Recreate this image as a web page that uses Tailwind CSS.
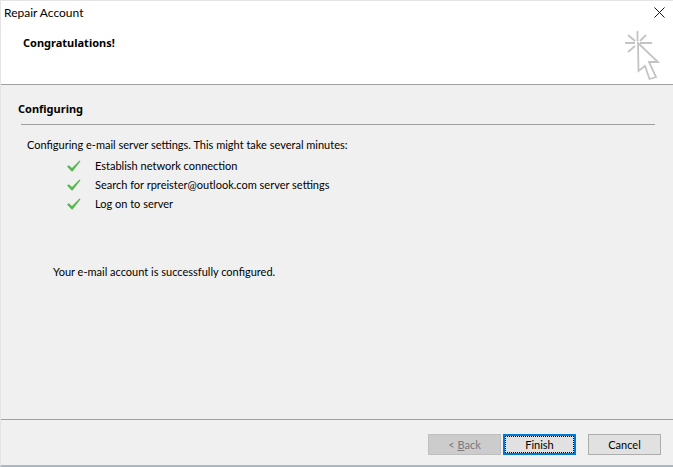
<!DOCTYPE html>
<html lang="en">
<head>
    <meta charset="UTF-8">
    <title>Repair Account</title>
    <script src="https://cdn.jsdelivr.net/npm/@tailwindcss/browser@4"></script>
</head>
<body class="bg-[#f0f0f0] font-['Lato',sans-serif] text-[11px] leading-[16px] text-black overflow-hidden">
    <div class="w-[673px] h-[467px] flex flex-col border-t border-l border-[#e4e4e4] border-b-2 border-b-[#a9b8c9]">
        <!-- header -->
        <div class="bg-white h-[83px] border-b border-[#a0a0a0] box-content relative">
            <div class="flex justify-between items-start pl-[3px] pr-[8px] pt-[4px]">
                <span class="text-[12px]">Repair Account</span>
                <svg class="mt-[2px]" width="11" height="11" viewBox="0 0 11 11" fill="none" stroke="#111" stroke-width="1"><path d="M0.5 0.5L10.5 10.5M10.5 0.5L0.5 10.5"/></svg>
            </div>
            <div class="pl-[22px] pt-[14px] font-['Noto_Sans',sans-serif] font-bold">Congratulations!</div>
            <svg class="absolute left-[619px] top-[25px]" width="44" height="56" viewBox="0 0 44 56" fill="none" stroke="#c4c4c4" stroke-width="1.8">
                <path d="M17.5 5V15M5 17H15M20 17H32M8 9L15 15M26 9L20 15M8 26L15 20"/>
                <path d="M18 17L18.5 45L25 40L29.5 53L36 51L29 36L38 36Z" fill="#fff"/>
            </svg>
        </div>

        <!-- body -->
        <div class="flex-1 flex flex-col">
            <div class="pl-[17px] pt-[16px] font-['Noto_Sans',sans-serif] font-bold">Configuring</div>
            <div class="ml-[20px] mr-[18px] mt-[7px] border-t border-[#a0a0a0]"></div>
            <div class="pl-[26px] pt-[12px]">Configuring e-mail server settings. This might take several minutes:</div>
            <ul class="mt-[5px] flex flex-col gap-[3px]">
                <li class="flex items-center h-[16px] pl-[66px]">
                    <svg class="w-[14px] h-[12px] mr-[14px]" viewBox="0 0 14 12" fill="#56b84e"><path d="M0 6.5L1.8 5.2L5 8L12.5 0.5L13.5 1.2L5.5 11.5H4.7Z"/></svg>
                    <span>Establish network connection</span>
                </li>
                <li class="flex items-center h-[16px] pl-[66px]">
                    <svg class="w-[14px] h-[12px] mr-[14px]" viewBox="0 0 14 12" fill="#56b84e"><path d="M0 6.5L1.8 5.2L5 8L12.5 0.5L13.5 1.2L5.5 11.5H4.7Z"/></svg>
                    <span>Search for rpreister@outlook.com server settings</span>
                </li>
                <li class="flex items-center h-[16px] pl-[66px]">
                    <svg class="w-[14px] h-[12px] mr-[14px]" viewBox="0 0 14 12" fill="#56b84e"><path d="M0 6.5L1.8 5.2L5 8L12.5 0.5L13.5 1.2L5.5 11.5H4.7Z"/></svg>
                    <span>Log on to server</span>
                </li>
            </ul>
            <div class="pl-[52px] mt-[52px]">Your e-mail account is successfully configured.</div>
        </div>

        <!-- footer -->
        <div class="border-t border-[#a0a0a0] h-[46px] flex justify-end items-start pt-[14px] pr-[12px]">
            <button class="w-[73px] h-[21px] bg-[#cccccc] border border-[#bfbfbf] text-[#7a7a7a] mr-[2px]">&lt; <u>B</u>ack</button>
            <button class="w-[73px] h-[21px] bg-[#e1e1e1] border-2 border-[#0078d7] outline-1 outline-dotted -outline-offset-3 outline-black mr-[12px]">Finish</button>
            <button class="w-[73px] h-[21px] bg-[#e1e1e1] border border-[#adadad]">Cancel</button>
        </div>
    </div>
</body>
</html>
